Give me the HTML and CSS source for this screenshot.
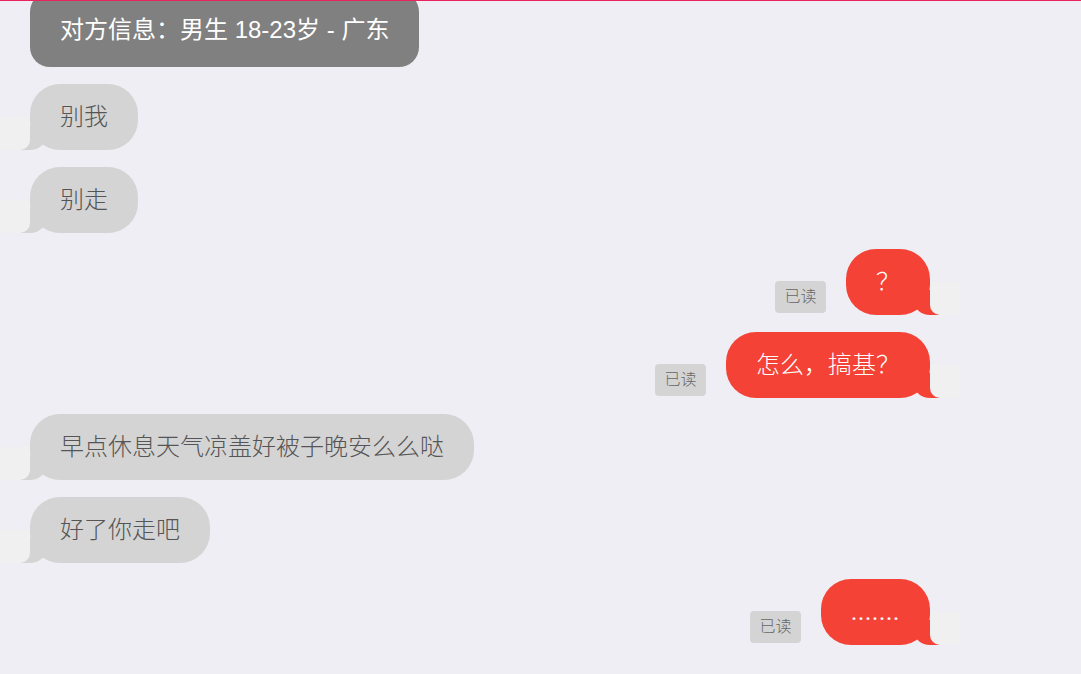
FILE: index.html
```html
<!DOCTYPE html>
<html lang="zh-CN">
<head>
    <meta charset="UTF-8">
    <meta name="viewport" content="width=device-width, initial-scale=1.0">
    <title>聊天记录</title>
    <link rel="stylesheet" href="styles.css">
</head>
<body>
    <div class="chat">
        <!-- 对方资料 -->
        <div class="row">
            <div class="info">对方信息：男生 18-23岁 - 广东</div>
        </div>

        <div class="row them">
            <div class="bubble from-them">别我</div>
        </div>
        <div class="row them">
            <div class="bubble from-them">别走</div>
        </div>

        <div class="row me">
            <span class="read">已读</span>
            <div class="bubble from-me">？</div>
        </div>
        <div class="row me">
            <span class="read">已读</span>
            <div class="bubble from-me">怎么，搞基？</div>
        </div>

        <div class="row them">
            <div class="bubble from-them">早点休息天气凉盖好被子晚安么么哒</div>
        </div>
        <div class="row them">
            <div class="bubble from-them">好了你走吧</div>
        </div>

        <div class="row me">
            <span class="read">已读</span>
            <div class="bubble from-me dots">.......</div>
        </div>
    </div>
</body>
</html>
```

FILE: styles.css
```css
/* 聊天页面 */
body {
    margin: 0;
    border-top: 1px solid #e8245f;
    background-color: #efeef4;
    font-family: "Liberation Serif", "Noto Sans CJK SC", serif;
    overflow: hidden;
}

.chat {
    width: 960px;
    margin-top: -9px;
}

.row {
    display: flex;
    align-items: flex-end;
    margin-bottom: 16.5px;
    padding: 0 30px;
}

.row.me {
    justify-content: flex-end;
    gap: 20px;
}

.info {
    padding: 22.5px 30px;
    line-height: 30px;
    font-size: 24px;
    font-family: "Liberation Sans", "Noto Sans CJK SC", sans-serif;
    color: #fff;
    background-color: #808080;
    border-radius: 20px;
    margin-bottom: 0.5px;
}

.bubble {
    position: relative;
    padding: 18px 30px;
    line-height: 30px;
    font-size: 24px;
    font-weight: 300;
    border-radius: 30px;
}

.from-them {
    color: #555;
    background-color: #d4d4d4;
}

.from-me {
    color: #fff;
    background-color: #f44336;
}

.dots {
    letter-spacing: 1px;
}

/* 气泡尾巴 */
.bubble::before,
.bubble::after {
    content: "";
    position: absolute;
    bottom: 0;
}

.from-them::before {
    left: -9px;
    width: 25px;
    height: 25px;
    background-color: #d4d4d4;
    border-bottom-right-radius: 16px 14px;
}

.from-them::after {
    left: -30px;
    width: 30px;
    height: 33px;
    background-color: #f0f0f0;
    border-bottom-right-radius: 10px;
}

.from-me::before {
    right: -9px;
    width: 25px;
    height: 25px;
    background-color: #f44336;
    border-bottom-left-radius: 16px 14px;
}

.from-me::after {
    right: -30px;
    width: 30px;
    height: 33px;
    background-color: #f0f0f0;
    border-bottom-left-radius: 10px;
}

.read {
    margin-bottom: 2px;
    padding: 0 9.5px;
    line-height: 32px;
    font-size: 16px;
    font-weight: 300;
    color: #666;
    background-color: #d4d4d4;
    border-radius: 4px;
}
```
